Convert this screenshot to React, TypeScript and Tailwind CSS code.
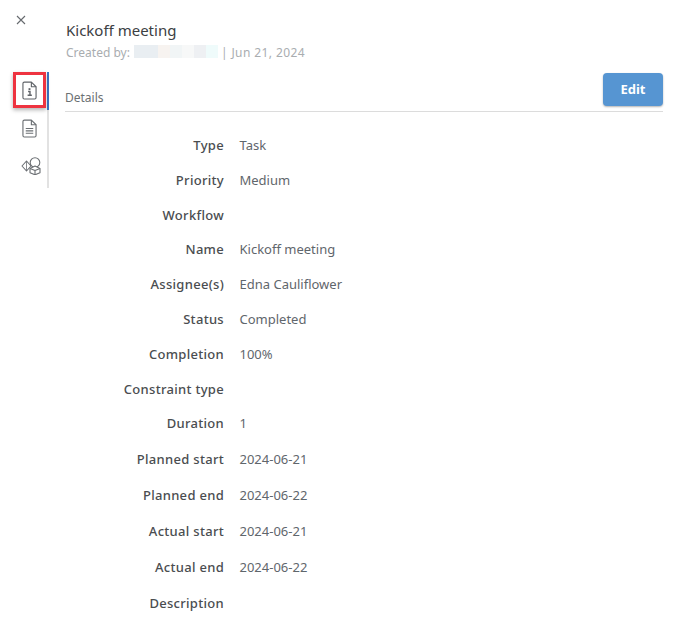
import React from 'react';

const rows: { label: string; value?: string; tall?: boolean }[] = [
  { label: 'Type', value: 'Task' },
  { label: 'Priority', value: 'Medium' },
  { label: 'Workflow' },
  { label: 'Name', value: 'Kickoff meeting' },
  { label: 'Assignee(s)', value: 'Edna Cauliflower' },
  { label: 'Status', value: 'Completed' },
  { label: 'Completion', value: '100%' },
  { label: 'Constraint type' },
  { label: 'Duration', value: '1' },
  { label: 'Planned start', value: '2024-06-21', tall: true },
  { label: 'Planned end', value: '2024-06-22', tall: true },
  { label: 'Actual start', value: '2024-06-21', tall: true },
  { label: 'Actual end', value: '2024-06-22', tall: true },
  { label: 'Description', tall: true },
];

const blur = ['bg-[#e9eef2]', 'bg-[#e9eef2]', 'bg-[#f7f3f0]', 'bg-[#f1f5f6]', 'bg-[#f7f8f8]', 'bg-[#eef0f3]', 'bg-[#effbfb]'];

function InfoIcon() {
  return (
    <svg width="15" height="19" viewBox="0 0 16 20" fill="none" stroke="#5f6368" strokeWidth="1.2">
      <path d="M3 1h7l5 5v11.5a1.5 1.5 0 0 1-1.5 1.5h-11A1.5 1.5 0 0 1 1 17.5v-15A1.5 1.5 0 0 1 2.5 1z" strokeLinejoin="round" />
      <path d="M10 1v5h5" strokeLinejoin="round" />
      <rect x="7" y="7.5" width="2" height="2" fill="#5f6368" stroke="none" />
      <path d="M6.5 11h2v4M6 15h4.5" strokeWidth="1.5" />
    </svg>
  );
}

function DocIcon() {
  return (
    <svg width="15" height="19" viewBox="0 0 16 20" fill="none" stroke="#6b6f73" strokeWidth="1.2">
      <path d="M3 1h7l5 5v11.5a1.5 1.5 0 0 1-1.5 1.5h-11A1.5 1.5 0 0 1 1 17.5v-15A1.5 1.5 0 0 1 2.5 1z" strokeLinejoin="round" />
      <path d="M10 1v5h5" strokeLinejoin="round" />
      <path d="M4 10h8M4 12.5h8M4 15h8" />
    </svg>
  );
}

function ShapesIcon() {
  return (
    <svg width="20" height="19" viewBox="0 0 20 19" fill="none" stroke="#6b6f73" strokeWidth="1.1" strokeLinejoin="round">
      <path d="M5.5 5 10 10 5.5 15 1 10z" />
      <path d="M5.5 5v10" strokeWidth="0.8" />
      <circle cx="14" cy="6.5" r="4.8" />
      <path d="M14 10l5 2.4v4.4L14 18.8 9 16.8v-4.4z" fill="white" />
      <path d="M9 12.4l5 2.2 5-2.2M14 14.6v4.2" />
    </svg>
  );
}

export default function App() {
  return (
    <div
      className="w-[678px] h-[638px] bg-white flex overflow-hidden"
      style={{ fontFamily: '"Noto Sans", sans-serif' }}
    >
      {/* Side rail */}
      <div className="w-[65px] shrink-0 flex flex-col">
        <div className="h-[72px] pl-[16px] pt-[15px]">
          <svg width="10" height="10" viewBox="0 0 10 10" stroke="#666a6e" strokeWidth="1.1">
            <path d="M1 1l8 8M9 1l-8 8" />
          </svg>
        </div>
        <div className="w-[49px] h-[116px] border-r-2 border-[#e2e2e2] flex flex-col">
          <div className="h-[38px] -mr-[2px] border-r-2 border-[#3d76c4]">
            <div className="ml-[13px] w-[33px] h-[36px] border-[3px] border-[#ee3340] shadow-[0_2px_4px_rgba(0,0,0,0.3)] flex items-center justify-center">
              <InfoIcon />
            </div>
          </div>
          <div className="h-[36px] pl-[22px] flex items-center">
            <DocIcon />
          </div>
          <div className="h-[38px] pl-[21px] flex items-center">
            <ShapesIcon />
          </div>
        </div>
      </div>

      {/* Main panel */}
      <div className="w-[598px] flex flex-col">
        <div className="pl-[1px] pt-[20px] h-[72px]">
          <div className="text-[15px] leading-[20px] text-[#3c4043]">Kickoff meeting</div>
          <div className="mt-[4px] flex items-center text-[12px] leading-[18px] text-[#a9adb0]">
            <span>Created by:</span>
            <span className="ml-[4px] mb-[3px] flex h-[13px]">
              {blur.map((c, i) => (
                <span key={i} className={`w-[12px] h-full ${c}`} />
              ))}
            </span>
            <span className="ml-[3px] tracking-[0.4px]">| Jun 21, 2024</span>
          </div>
        </div>

        <div className="h-[40px] border-b border-[#dcdcdc] flex items-start justify-between">
          <span className="mt-[18px] text-[12px] leading-[16px] text-[#6b7073]">Details</span>
          <button className="mt-[1px] w-[60px] h-[33px] rounded-[4px] bg-[#5695d2] shadow-[0_1px_2px_rgba(0,0,0,0.3)] text-white text-[13px] font-bold">
            Edit
          </button>
        </div>

        <div className="mt-[16.3px] flex flex-col">
          {rows.map((r) => (
            <div key={r.label} className={`flex items-center text-[13px] ${r.tall ? 'h-[36px]' : 'h-[34.8px]'}`}>
              <div className="w-[159px] text-right font-medium tracking-[0.3px] text-[#4a4d50]">{r.label}</div>
              <div className="ml-[15.5px] text-[#5f666c]">{r.value}</div>
            </div>
          ))}
        </div>
      </div>
    </div>
  );
}
